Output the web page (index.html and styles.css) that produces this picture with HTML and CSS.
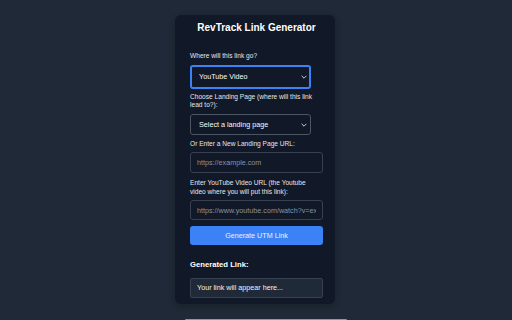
FILE: index.html
```html
<!DOCTYPE html>
<html lang="en">

<head>
    <meta charset="UTF-8">
    <meta name="viewport" content="width=device-width, initial-scale=1.0">
    <title>RevTrack Link Generator</title>
    <link rel="stylesheet" href="styles.css">
</head>

<body>

    <div class="container">
        <h2>RevTrack Link Generator</h2>

        <label for="destination">Where will this link go?</label>
        <div class="select-wrap">
            <select id="destination" class="select focused">
                <option>YouTube Video</option>
                <option>Instagram Post</option>
            </select>
            <svg class="chevron" viewBox="0 0 10 6" width="6" height="4"><path d="M1 1l4 4 4-4" fill="none" stroke="currentColor" stroke-width="1.6"/></svg>
        </div>

        <label for="landing">Choose Landing Page (where will this link lead to?):</label>
        <div class="select-wrap">
            <select id="landing" class="select">
                <option>Select a landing page</option>
            </select>
            <svg class="chevron" viewBox="0 0 10 6" width="6" height="4"><path d="M1 1l4 4 4-4" fill="none" stroke="currentColor" stroke-width="1.6"/></svg>
        </div>

        <label for="newPage">Or Enter a New Landing Page URL:</label>
        <input type="text" id="newPage" class="text-input" placeholder="https://example.com">

        <label for="videoUrl">Enter YouTube Video URL (the Youtube video where you will put this link):</label>
        <input type="text" id="videoUrl" class="text-input last" placeholder="https://www.youtube.com/watch?v=example">

        <button class="generate-button">Generate UTM Link</button>

        <h3>Generated Link:</h3>
        <div class="result">Your link will appear here...</div>
    </div>

    <div class="next-panel"></div>

</body>

</html>
```

FILE: styles.css
```css
body {
    font-family: "Liberation Sans", Arial, sans-serif;
    background-color: #1f2937;
    margin: 0;
    padding: 0 2px 0 0;
    display: flex;
    flex-direction: column;
    align-items: center;
    height: 320px;
    overflow: hidden;
}

.container {
    width: 160px;
    box-sizing: border-box;
    margin-top: 15px;
    background: #111827;
    padding: 7px 12px 6px 15px;
    border-radius: 6px;
    box-shadow: 0 2px 6px rgba(0, 0, 0, 0.25);
}

h2 {
    margin: 0 0 18.4px;
    font-size: 10px;
    line-height: 12px;
    text-align: center;
    color: #ffffff;
}

label {
    display: block;
    font-size: 6.6px;
    line-height: 8.5px;
    color: #e5e7eb;
    margin-bottom: 4.3px;
}

.select-wrap {
    position: relative;
    width: 120.5px;
    margin-bottom: 4.2px;
}

.select {
    display: block;
    width: 100%;
    height: 21.4px;
    box-sizing: border-box;
    -webkit-appearance: none;
    appearance: none;
    background: #111827;
    border: 1px solid #4b5563;
    border-radius: 3px;
    color: #f9fafb;
    font-family: inherit;
    font-size: 7.2px;
    padding: 0 0 0 8px;
    outline: none;
}

.select.focused {
    height: 23.4px;
    border: 2px solid #3b82f6;
    padding-left: 7px;
}

.chevron {
    position: absolute;
    right: 4px;
    top: 50%;
    margin-top: -2px;
    color: #d1d5db;
}

.text-input {
    display: block;
    width: 133px;
    height: 21px;
    box-sizing: border-box;
    background: #111827;
    border: 1px solid #374151;
    border-radius: 3px;
    color: #f9fafb;
    font-family: inherit;
    font-size: 7.2px;
    padding: 0 6px;
    margin-bottom: 5.6px;
    outline: none;
}

.text-input::placeholder {
    color: #8b93a0;
}

.text-input.last {
    height: 20px;
    margin-bottom: 6px;
}

.generate-button {
    display: block;
    width: 133px;
    height: 19px;
    background-color: #3b82f6;
    color: #eef2ff;
    font-family: inherit;
    font-size: 7.2px;
    border: none;
    border-radius: 3px;
    cursor: pointer;
    padding: 0;
}

.generate-button:hover {
    background-color: #2563eb;
}

h3 {
    margin: 15px 0 7.3px;
    font-size: 7.7px;
    line-height: 10px;
    color: #ffffff;
}

.result {
    width: 133px;
    height: 20px;
    box-sizing: border-box;
    background: #1f2937;
    border: 1px solid #374151;
    border-radius: 2px;
    color: #f3f4f6;
    font-size: 7.2px;
    line-height: 18px;
    padding: 0 6px;
}

.next-panel {
    width: 162px;
    height: 10px;
    margin-top: 15px;
    margin-left: 22px;
    background: #8f96a3;
    border-radius: 3px 3px 0 0;
}
```
